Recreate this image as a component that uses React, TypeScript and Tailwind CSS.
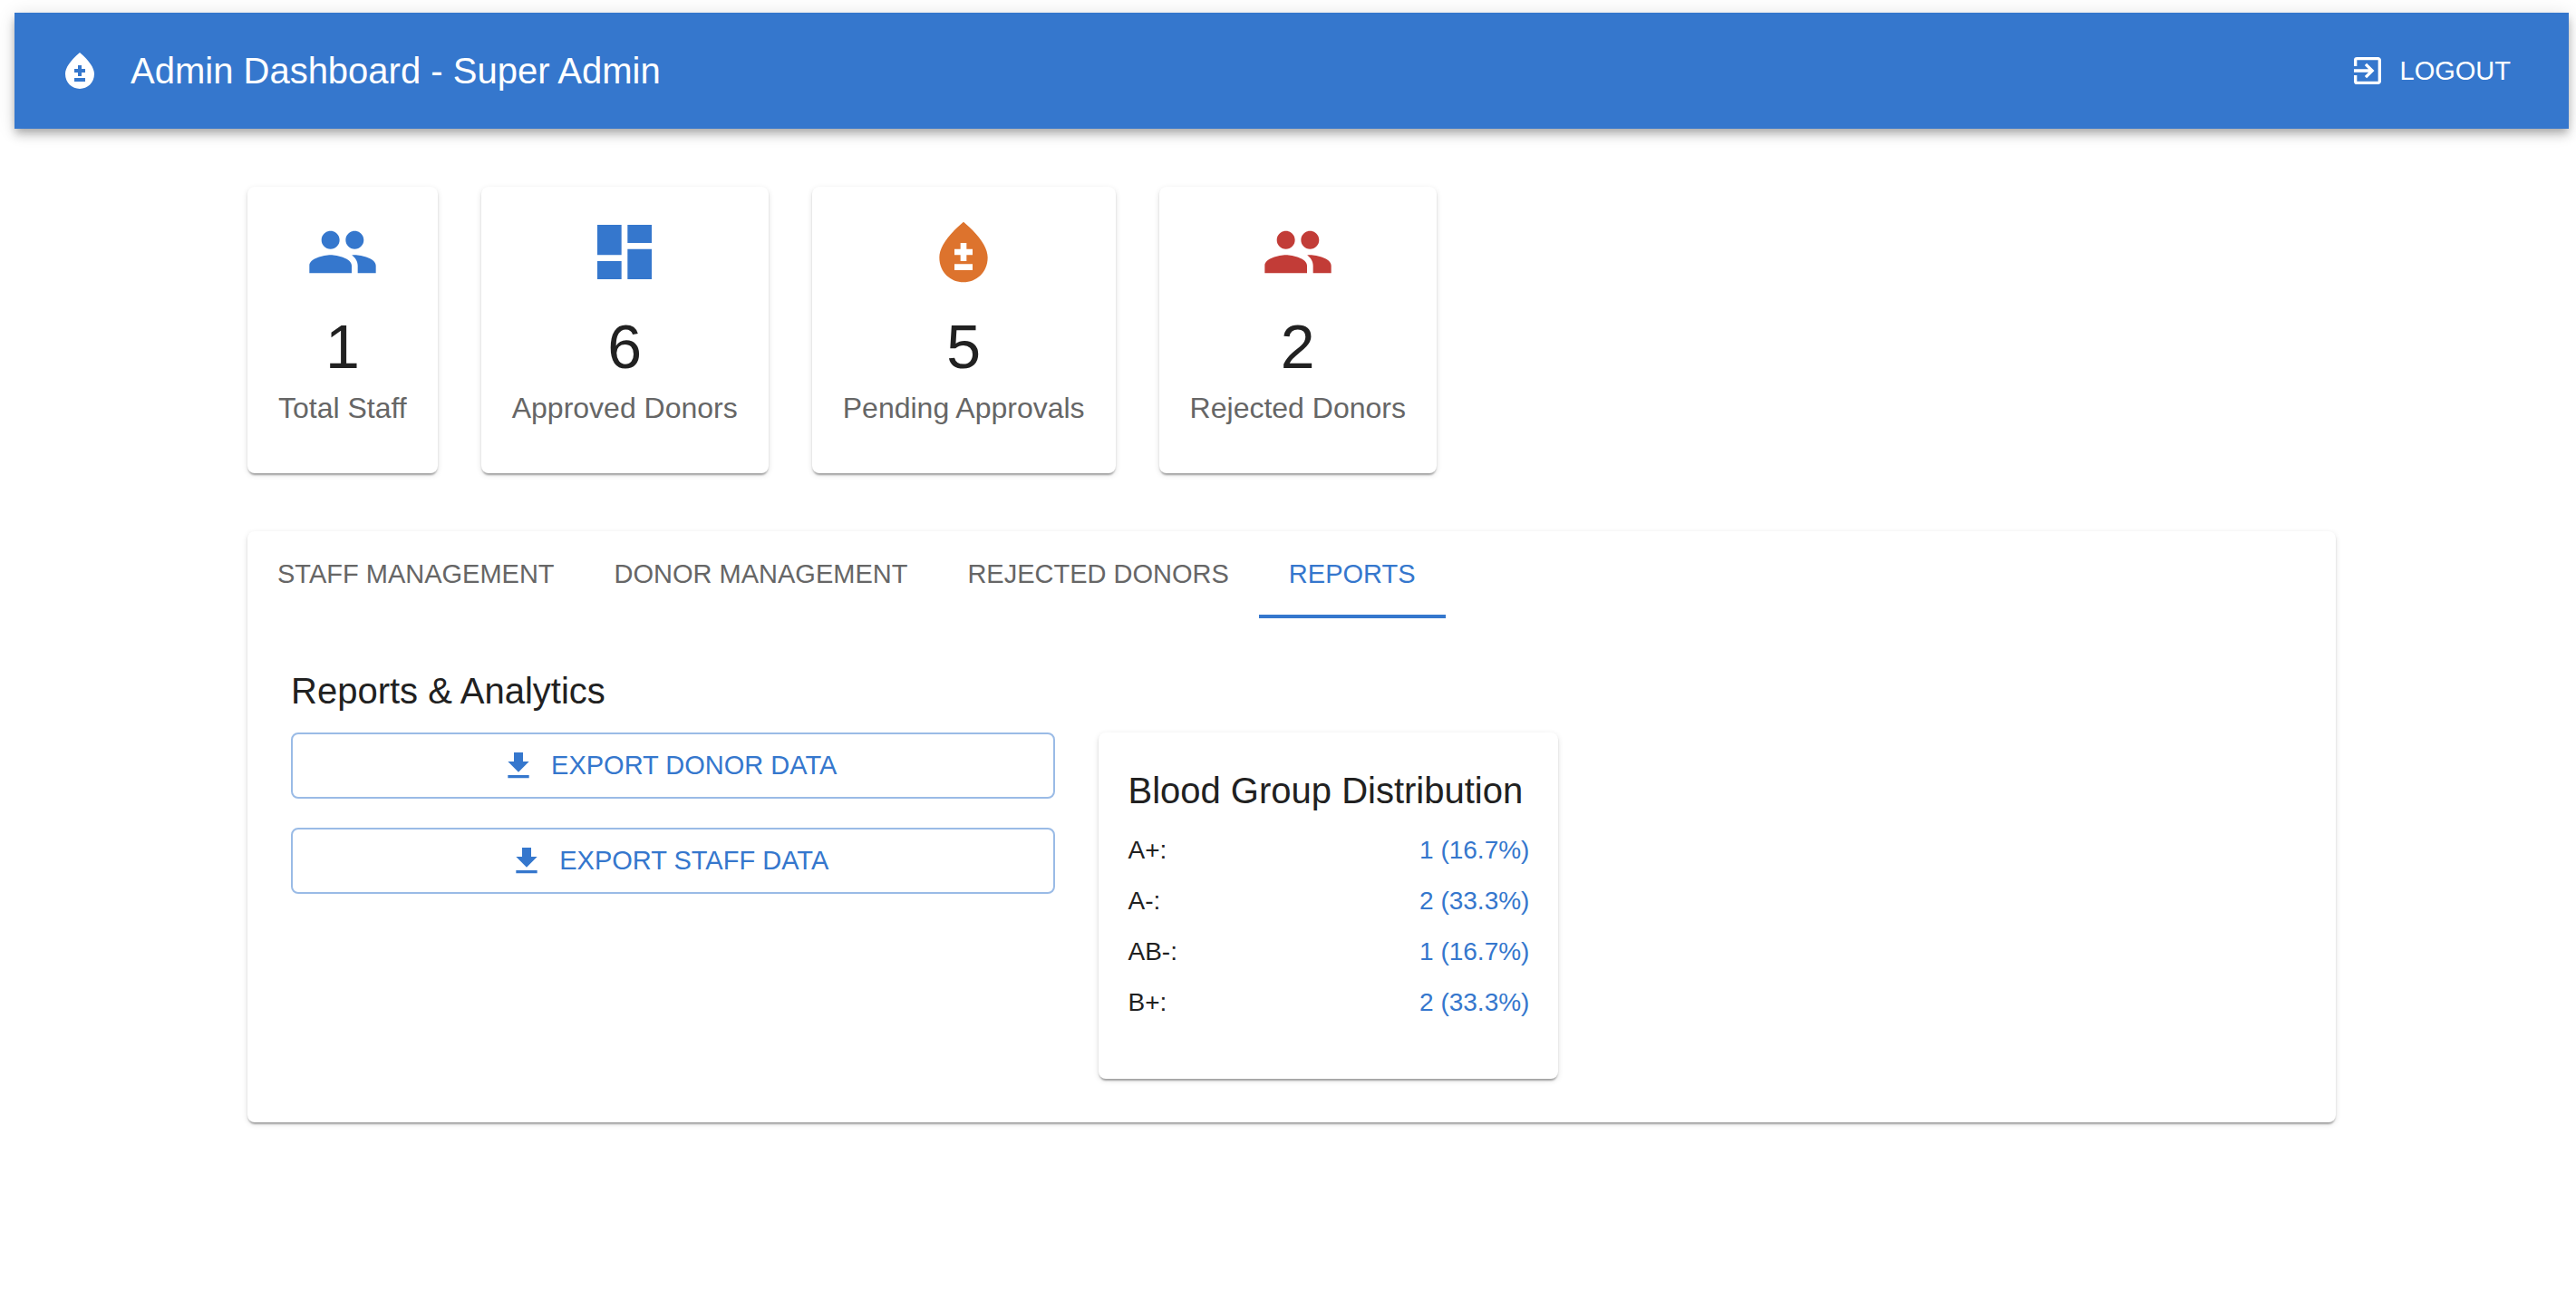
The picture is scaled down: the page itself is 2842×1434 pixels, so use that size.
import type { ReactNode } from "react";
import type { IconType } from "react-icons";
import {
  MdBloodtype,
  MdDashboard,
  MdDownload,
  MdExitToApp,
  MdPeople,
} from "react-icons/md";

const PAPER =
  "rounded-lg bg-white shadow-[0_4px_2px_-2px_rgba(0,0,0,0.2),0_2px_2px_0_rgba(0,0,0,0.14),0_2px_6px_0_rgba(0,0,0,0.12)]";

const stats: { label: string; value: number; icon: IconType; color: string }[] = [
  { label: "Total Staff", value: 1, icon: MdPeople, color: "text-[#3577cd]" },
  { label: "Approved Donors", value: 6, icon: MdDashboard, color: "text-[#3577cd]" },
  { label: "Pending Approvals", value: 5, icon: MdBloodtype, color: "text-[#dd732d]" },
  { label: "Rejected Donors", value: 2, icon: MdPeople, color: "text-[#c23c37]" },
];

const tabs = ["Staff Management", "Donor Management", "Rejected Donors", "Reports"];
const activeTab = "Reports";

const bloodGroups = [
  { group: "A+", summary: "1 (16.7%)" },
  { group: "A-", summary: "2 (33.3%)" },
  { group: "AB-", summary: "1 (16.7%)" },
  { group: "B+", summary: "2 (33.3%)" },
];

function ExportButton({ children }: { children: ReactNode }) {
  return (
    <button
      type="button"
      className="flex w-full items-center justify-center rounded-lg border-2 border-[#9abbe6] px-8 py-2.5 text-[29px] leading-[49px] text-[#3577cd] uppercase"
    >
      <MdDownload className="mr-4 -ml-2.5 size-10" aria-hidden />
      {children}
    </button>
  );
}

export default function App() {
  return (
    <div className="min-h-screen bg-white pt-3.5 pr-2 pl-4 font-['Liberation_Sans',Arial,sans-serif] text-[#212121]">
      <header className="flex h-32 items-center bg-[#3577cd] px-12 text-white shadow-[0_4px_8px_-2px_rgba(0,0,0,0.2),0_8px_10px_0_rgba(0,0,0,0.14),0_2px_20px_0_rgba(0,0,0,0.12)]">
        <MdBloodtype className="mr-8 size-12" aria-hidden />
        <h1 className="grow text-[40px] leading-[64px]">Admin Dashboard - Super Admin</h1>
        <button
          type="button"
          className="flex items-center rounded-lg px-4 py-3 text-[29px] leading-[49px] uppercase"
        >
          <MdExitToApp className="mr-4 size-10" aria-hidden />
          Logout
        </button>
      </header>

      <main className="mx-auto w-full max-w-[2400px] px-12 pt-16">
        <section aria-label="Statistics" className="mb-16 flex flex-wrap gap-12">
          {stats.map(({ label, value, icon: Icon, color }) => (
            <div
              key={label}
              className={`${PAPER} flex flex-col items-center px-[34px] pt-8 pb-12`}
            >
              <Icon className={`mb-6 size-20 ${color}`} aria-hidden />
              <p className="mb-1 text-[68px] leading-[80px]">{value}</p>
              <p className="text-[32px] leading-[48px] text-[#666666]">{label}</p>
            </div>
          ))}
        </section>

        <section className={PAPER}>
          <div role="tablist" className="flex">
            {tabs.map((tab) => (
              <button
                key={tab}
                type="button"
                role="tab"
                aria-selected={tab === activeTab}
                className={`h-24 border-b-4 px-[33px] pt-0.5 text-[29px] leading-9 uppercase ${
                  tab === activeTab
                    ? "border-[#3577cd] text-[#3577cd]"
                    : "border-transparent text-[#666666]"
                }`}
              >
                {tab}
              </button>
            ))}
          </div>

          <div role="tabpanel" aria-label="Reports" className="p-12">
            <h2 className="mb-3.5 text-[40px] leading-[64px]">Reports &amp; Analytics</h2>
            <div className="flex items-start gap-12">
              <div className="flex basis-[38.2%] flex-col gap-8">
                <ExportButton>Export Donor Data</ExportButton>
                <ExportButton>Export Staff Data</ExportButton>
              </div>
              <div className={`${PAPER} min-w-[507px] px-8 pt-8 pb-12`}>
                <h3 className="mb-3.5 text-[40px] leading-[64px]">Blood Group Distribution</h3>
                <dl>
                  {bloodGroups.map(({ group, summary }) => (
                    <div key={group} className="mb-4 flex justify-between text-[28px] leading-10">
                      <dt>{group}:</dt>
                      <dd className="text-[#3577cd]">{summary}</dd>
                    </div>
                  ))}
                </dl>
              </div>
            </div>
          </div>
        </section>
      </main>
    </div>
  );
}
